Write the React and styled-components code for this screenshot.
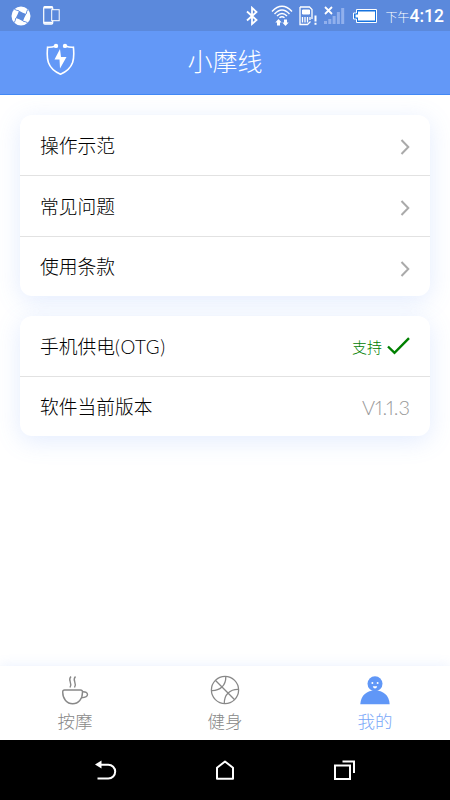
import React from "react";
import styled, { createGlobalStyle } from "styled-components";

const App = () => {
  return (
    <>
      <GlobalStyle />
      <StPhone>
        <StatusBar />
        <StHeader>
          <StShield>
            <ShieldIcon />
          </StShield>
          <StTitle>小摩线</StTitle>
        </StHeader>
        <StMain>
          <StCard>
            {menus.map((menu) => (
              <StRow key={menu}>
                <StLabel>{menu}</StLabel>
                <ChevronIcon />
              </StRow>
            ))}
          </StCard>
          <StCard>
            <StRow>
              <StLabel>
                手机供电<StLatin>(OTG)</StLatin>
              </StLabel>
              <StSupport>
                支持
                <CheckIcon />
              </StSupport>
            </StRow>
            <StRow>
              <StLabel>软件当前版本</StLabel>
              <StVersion>V1.1.3</StVersion>
            </StRow>
          </StCard>
        </StMain>
        <StTabBar>
          <StTab>
            <CupIcon />
            <span>按摩</span>
          </StTab>
          <StTab>
            <BallIcon />
            <span>健身</span>
          </StTab>
          <StTab $active>
            <PersonIcon />
            <span>我的</span>
          </StTab>
        </StTabBar>
        <SystemNav />
      </StPhone>
    </>
  );
};

export default App;

const menus = ["操作示范", "常见问题", "使用条款"];

const StatusBar = () => (
  <StStatusBar>
    <StStatusLeft>
      <svg width="20" height="20" viewBox="0 0 20 20">
        <circle cx="10" cy="10" r="9.500" fill="#fff" />
        <path d="M8 4.800Q12 7 15.200 8 13 12 12 15.200 8 13 4.800 12 7 8 8 4.800z" fill="#5b89dc" />
        <g stroke="#5b89dc" strokeWidth="0.900" fill="none">
          <path d="M8 4.800Q5 4.500 3.200 3" />
          <path d="M15.200 8Q15.500 5 17 3.200" />
          <path d="M12 15.200Q15 15.500 16.800 17" />
          <path d="M4.800 12Q4.500 15 3 16.800" />
        </g>
      </svg>
      <svg width="17" height="19" viewBox="0 0 17 19" fill="none" stroke="#fff">
        <rect x="0.7" y="0.7" width="9" height="17.500" rx="1.200" strokeWidth="1.200" />
        <path d="M1 1.500h8.500M1 16.800h8.500" strokeWidth="2" />
        <rect x="8.700" y="3.700" width="7.500" height="11" fill="#5b89dc" />
      </svg>
    </StStatusLeft>
    <StStatusRight>
      <svg width="12" height="20" viewBox="0 0 12 20" fill="none" stroke="#fff" strokeWidth="1.800">
        <path d="M1 5.500 10.500 14 6 18V1.800L10.500 6 1 14.500" />
      </svg>
      <svg width="22" height="21" viewBox="0 0 22 21" fill="none" stroke="#fff" strokeWidth="1.400">
        <path d="M1 6.500Q11-4 21 6.500M3.500 9Q11 1 18.500 9M6 11Q11 6 16 11M8.500 12.800Q11 10.500 13.500 12.800" />
        <path
          d="M4.300 17.500 7.500 14l3.200 3.500H9V20.500H6v-3zM11.300 17.500l3.200 3.500 3.200-3.500H16v-3h-3v3z"
          fill="#fff"
          stroke="none"
        />
      </svg>
      <svg width="19" height="20" viewBox="0 0 19 20" fill="none" stroke="#fff">
        <path d="M1 1h9.500l2.500 2.500V13M1 1v17.500h7.500l3-3" strokeWidth="1.300" />
        <path d="M3.500 4h7v4h-7z" fill="#fff" />
        <path d="M3.500 11v5.500M6 11v5.500M8.500 11v5.500M11 11v3" strokeWidth="1.300" />
        <path d="M16.500 9.500v6M16.500 16.800v2" strokeWidth="2" />
      </svg>
      <svg width="21" height="19" viewBox="0 0 21 19" fill="#91b0ed">
        <path d="M0 15h3v3H0zM4.300 13h3v5h-3zM8.600 10h3v8h-3zM12.900 6h3v12h-3zM17.200 2h3v16h-3z" />
        <path d="m1 1 7 7M8 1 1 8" stroke="#fff" strokeWidth="1.800" />
      </svg>
      <svg width="24" height="14" viewBox="0 0 24 14">
        <path d="M3.500.5h20v13h-20V10h-3V4h3z" fill="#1673df" stroke="#fff" />
        <path d="M5 2.500h17v9H5V8.500H2.500v-3H5z" fill="#fff" />
      </svg>
      <StClock>
        <small>下午</small>4:12
      </StClock>
    </StStatusRight>
  </StStatusBar>
);

const SystemNav = () => (
  <StSystemNav>
    <svg width="22" height="21" viewBox="0 0 22 21" fill="none" stroke="#fff" strokeWidth="2">
      <path d="M5 4.700h8.300a6.900 6.900 0 0 1 0 13.800H2.500" />
      <path d="M0 4.500 6.500.5v8z" fill="#fff" stroke="none" />
    </svg>
    <svg width="20" height="21" viewBox="0 0 20 21" fill="none" stroke="#fff" strokeWidth="2">
      <path d="M2 7.800 10 1.500l8 6.300v11H2z" strokeLinejoin="round" />
    </svg>
    <svg width="22" height="21" viewBox="0 0 22 21" fill="none" stroke="#fff" strokeWidth="2">
      <path d="M2 5.500h15v13.500H2zM9.500 1.500h11.500v11.500" />
    </svg>
  </StSystemNav>
);

const ShieldIcon = () => (
  <svg width="29" height="33" viewBox="0 0 29 33" fill="none">
    <path
      d="M9.500 3Q5.500 4.500 1.600 4.200C.5 15 .5 25 14.500 31.200 28.500 25 28.500 15 27.400 4.200Q23.500 4.500 19.500 3"
      stroke="#fff"
      strokeWidth="1.600"
    />
    <circle cx="10" cy="2.900" r="2.200" fill="#fff" />
    <circle cx="19" cy="2.900" r="2.200" fill="#fff" />
    <path d="M14 6 8.500 16.500h5L14 25.500l6.500-11.500H15z" fill="#fff" />
  </svg>
);

const ChevronIcon = () => (
  <svg width="10" height="16" viewBox="0 0 10 16" fill="none">
    <path d="m1.500 1 6.800 7-6.800 7" stroke="#aaa" strokeWidth="2" />
  </svg>
);

const CheckIcon = () => (
  <svg width="23" height="18" viewBox="0 0 23 18" fill="none">
    <path d="m1 9.500 6.500 6.300L22 1.200" stroke="#008000" strokeWidth="2.400" />
  </svg>
);

const CupIcon = () => (
  <svg width="30" height="30" viewBox="0 0 30 30" fill="none" stroke="currentColor" strokeWidth="1.400">
    <path d="M4.500 15h16Q22.500 15 22.500 17C22.500 24 18.500 28.800 12.700 28.800S2.700 24 2.700 17Q2.700 15 4.500 15z" />
    <path d="M22.300 16.800q5.200-.3 5.200 2.700t-6 3.200M11 1.500c-4 4 2 5.500-1 11M15.500 1.500c-4 4 2 5.500-1 11" />
  </svg>
);

const BallIcon = () => (
  <svg width="30" height="30" viewBox="0 0 30 30" fill="none" stroke="currentColor" strokeWidth="1.300">
    <circle cx="15" cy="15" r="13.600" />
    <path d="m5.300 5.300 19.400 19.400M1.400 15.700C10 16 16 10.500 15.800 1.400M14.300 28.600C14 19.500 20 14 28.600 14.300" />
  </svg>
);

const PersonIcon = () => (
  <svg width="30" height="30" viewBox="0 0 30 30" fill="#6097f7">
    <circle cx="15" cy="8.700" r="7.500" />
    <path d="M.3 29.200C.8 20 7 15.500 15 15.500S29.200 20 29.700 29.200z" />
    <circle cx="12.400" cy="8" r="1" fill="#fff" />
    <circle cx="17.600" cy="8" r="1" fill="#fff" />
    <path d="M12.800 11.300h4.400q-.5 2.200-2.200 2.200t-2.200-2.200z" fill="#fff" />
  </svg>
);

const GlobalStyle = createGlobalStyle`
  * {
    box-sizing: border-box;
  }
  body {
    margin: 0;
    background-color: #fff;
    font-family: Lato, "Noto Sans CJK SC", sans-serif;
    font-weight: 300;
  }
  svg {
    display: block;
    flex-shrink: 0;
  }
`;
const StPhone = styled.div`
  display: flex;
  flex-direction: column;
  width: 450px;
  height: 800px;
  overflow: hidden;
`;
const StStatusBar = styled.div`
  display: flex;
  justify-content: space-between;
  height: 31px;
  padding: 0 6px 0 11px;
  background-color: #5b89dc;
  color: #fff;
`;
const StStatusLeft = styled.div`
  display: flex;
  align-items: center;
  gap: 12px;
`;
const StStatusRight = styled.div`
  display: flex;
  align-items: center;
  gap: 8px;

  & svg:nth-child(2) {
    margin-left: 5px;
  }
  & svg:nth-child(3) {
    margin-left: -2px;
  }
  & svg:nth-child(4) {
    margin-left: -2px;
  }
`;
const StClock = styled.div`
  margin-left: 1px;
  padding-top: 3px;
  font-family: Roboto, "Noto Sans CJK SC", sans-serif;
  font-size: 17.500px;
  font-weight: 500;
  line-height: 31px;
  white-space: nowrap;

  & small {
    font-size: 12px;
    font-weight: 300;
  }
`;
const StHeader = styled.header`
  display: grid;
  grid-template-columns: 120px 1fr 120px;
  align-items: center;
  height: 64px;
  background-color: #6398f7;
  border-bottom: 1px solid #4288f5;
  color: #fff;
`;
const StShield = styled.div`
  padding: 0 0 6px 46px;
`;
const StTitle = styled.h1`
  margin: 0;
  padding-bottom: 4px;
  font-size: 25px;
  font-weight: 300;
  line-height: 36px;
  text-align: center;
`;
const StMain = styled.main`
  display: flex;
  flex-direction: column;
  flex: 1;
  gap: 20px;
  padding: 20px;
`;
const StCard = styled.section`
  border-radius: 12px;
  background-color: #fff;
  box-shadow: 0 5px 25px rgba(99, 152, 247, 0.18);
`;
const StRow = styled.div`
  display: flex;
  justify-content: space-between;
  align-items: center;
  height: 60px;
  padding: 0 20px;
  font-size: 18.75px;
  color: #000;

  & + & {
    height: 61px;
    border-top: 1px solid #e2e2e2;
  }
  & + &:last-child {
    height: 60px;
  }
  & > svg {
    margin-top: 4px;
  }
`;
const StLabel = styled.span`
  padding-bottom: 2px;
`;
const StLatin = styled.span`
  letter-spacing: 0.6px;
`;
const StSupport = styled.div`
  display: flex;
  align-items: center;
  gap: 5px;
  font-size: 15px;
  color: #008000;
`;
const StVersion = styled.span`
  padding-top: 1px;
  font-size: 20px;
  font-variant-numeric: proportional-nums;
  color: #999;
`;
const StTabBar = styled.nav`
  display: grid;
  grid-template-columns: repeat(3, 1fr);
  height: 74px;
  background-color: #fff;
  box-shadow: 0 0 12px rgba(99, 152, 247, 0.14);
`;
const StTab = styled.div`
  display: flex;
  flex-direction: column;
  align-items: center;
  padding-top: 9px;
  font-size: 17.500px;
  line-height: 33px;
  color: ${(props) => (props.$active ? "#7aa8f9" : "#888")};
`;
const StSystemNav = styled.div`
  display: flex;
  justify-content: center;
  align-items: center;
  gap: 98px;
  height: 60px;
  background-color: #000;
`;
